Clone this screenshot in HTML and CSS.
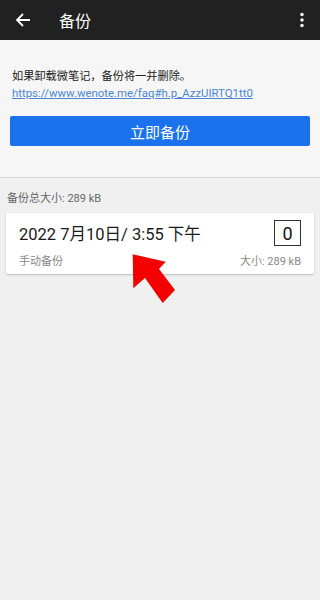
FILE: index.html
```html
<!DOCTYPE html>
<html lang="zh">
<head>
<meta charset="utf-8">
<link rel="stylesheet" href="styles.css">
</head>
<body>
<header class="bar">
  <svg class="back" width="16" height="16" viewBox="0 0 16 16"><path d="M15 8H2.5M8 2L2 8l6 6" fill="none" stroke="#fff" stroke-width="1.8"/></svg>
  <span class="title">备份</span>
  <svg class="more" width="4" height="16" viewBox="0 0 4 16"><circle cx="2" cy="2.5" r="1.7" fill="#fff"/><circle cx="2" cy="8" r="1.7" fill="#fff"/><circle cx="2" cy="13.5" r="1.7" fill="#fff"/></svg>
</header>
<section class="top">
  <p class="note">如果卸载微笔记，备份将一并删除。</p>
  <a class="link" href="#">https://www.wenote.me/faq#h.p_AzzUIRTQ1tt0</a>
  <button class="btn">立即备份</button>
</section>
<main class="list">
  <div class="total">备份总大小: 289 kB</div>
  <div class="card">
    <div class="row">
      <span class="date">2022 7月10日/ 3:55 下午</span>
      <span class="count">0</span>
    </div>
    <div class="row sub">
      <span>手动备份</span>
      <span>大小: 289 kB</span>
    </div>
  </div>
</main>
<svg class="arrow" width="60" height="60" viewBox="120 245 60 60"><polygon points="132.7,254.3 165.7,261.7 159,269 175,290 162.7,303 145,278 133.3,288.3" fill="#f50000"/></svg>
</body>
</html>
```
FILE: styles.css
```css
html, body { margin: 0; padding: 0; }
body {
  width: 320px; height: 600px; background: #f0f0f0;
  font-family: Roboto, "Noto Sans CJK SC", sans-serif;
  position: relative; overflow: hidden;
}
.bar {
  height: 40px; background: #212121; display: flex; align-items: center;
  padding: 0 16px 0 15px; color: #fff;
}
.back { flex: none; }
.title { font-size: 16px; margin-left: 28px; flex: 1; }
.more { flex: none; }
.top {
  background: #f6f6f6; border-bottom: 1px solid #dcdcdc;
  padding: 29px 10px 0 12px; height: 108px; box-sizing: content-box;
}
.note { margin: 0; font-size: 11.2px; line-height: 16px; color: #222; }
.link { display: block; font-size: 11.4px; line-height: 16px; color: #4a86d8; text-decoration: underline; }
.btn {
  display: block; width: 300px; height: 30px; margin: 15px 0 0 -2px; border: none; border-radius: 2px;
  background: #1a73ed; color: #fff; font-size: 15px; font-family: inherit; padding: 0;
}
.list { padding: 14px 6px 0 6px; }
.total { font-size: 11px; color: #666; line-height: 14px; padding-left: 1px; }
.card {
  margin-top: 7px; background: #fff; border-radius: 2px;
  box-shadow: 0 1px 2px rgba(0,0,0,0.22); padding: 7px 13px 6px 13px;
}
.row { display: flex; justify-content: space-between; align-items: center; }
.date { font-size: 16.5px; color: #1a1a1a; }
.count {
  width: 25px; height: 24px; border: 1px solid #333; font-size: 18px; color: #111;
  display: flex; align-items: center; justify-content: center;
}
.sub { font-size: 11px; color: #888; margin-top: 6px; }
.arrow { position: absolute; left: 120px; top: 245px; }
```
